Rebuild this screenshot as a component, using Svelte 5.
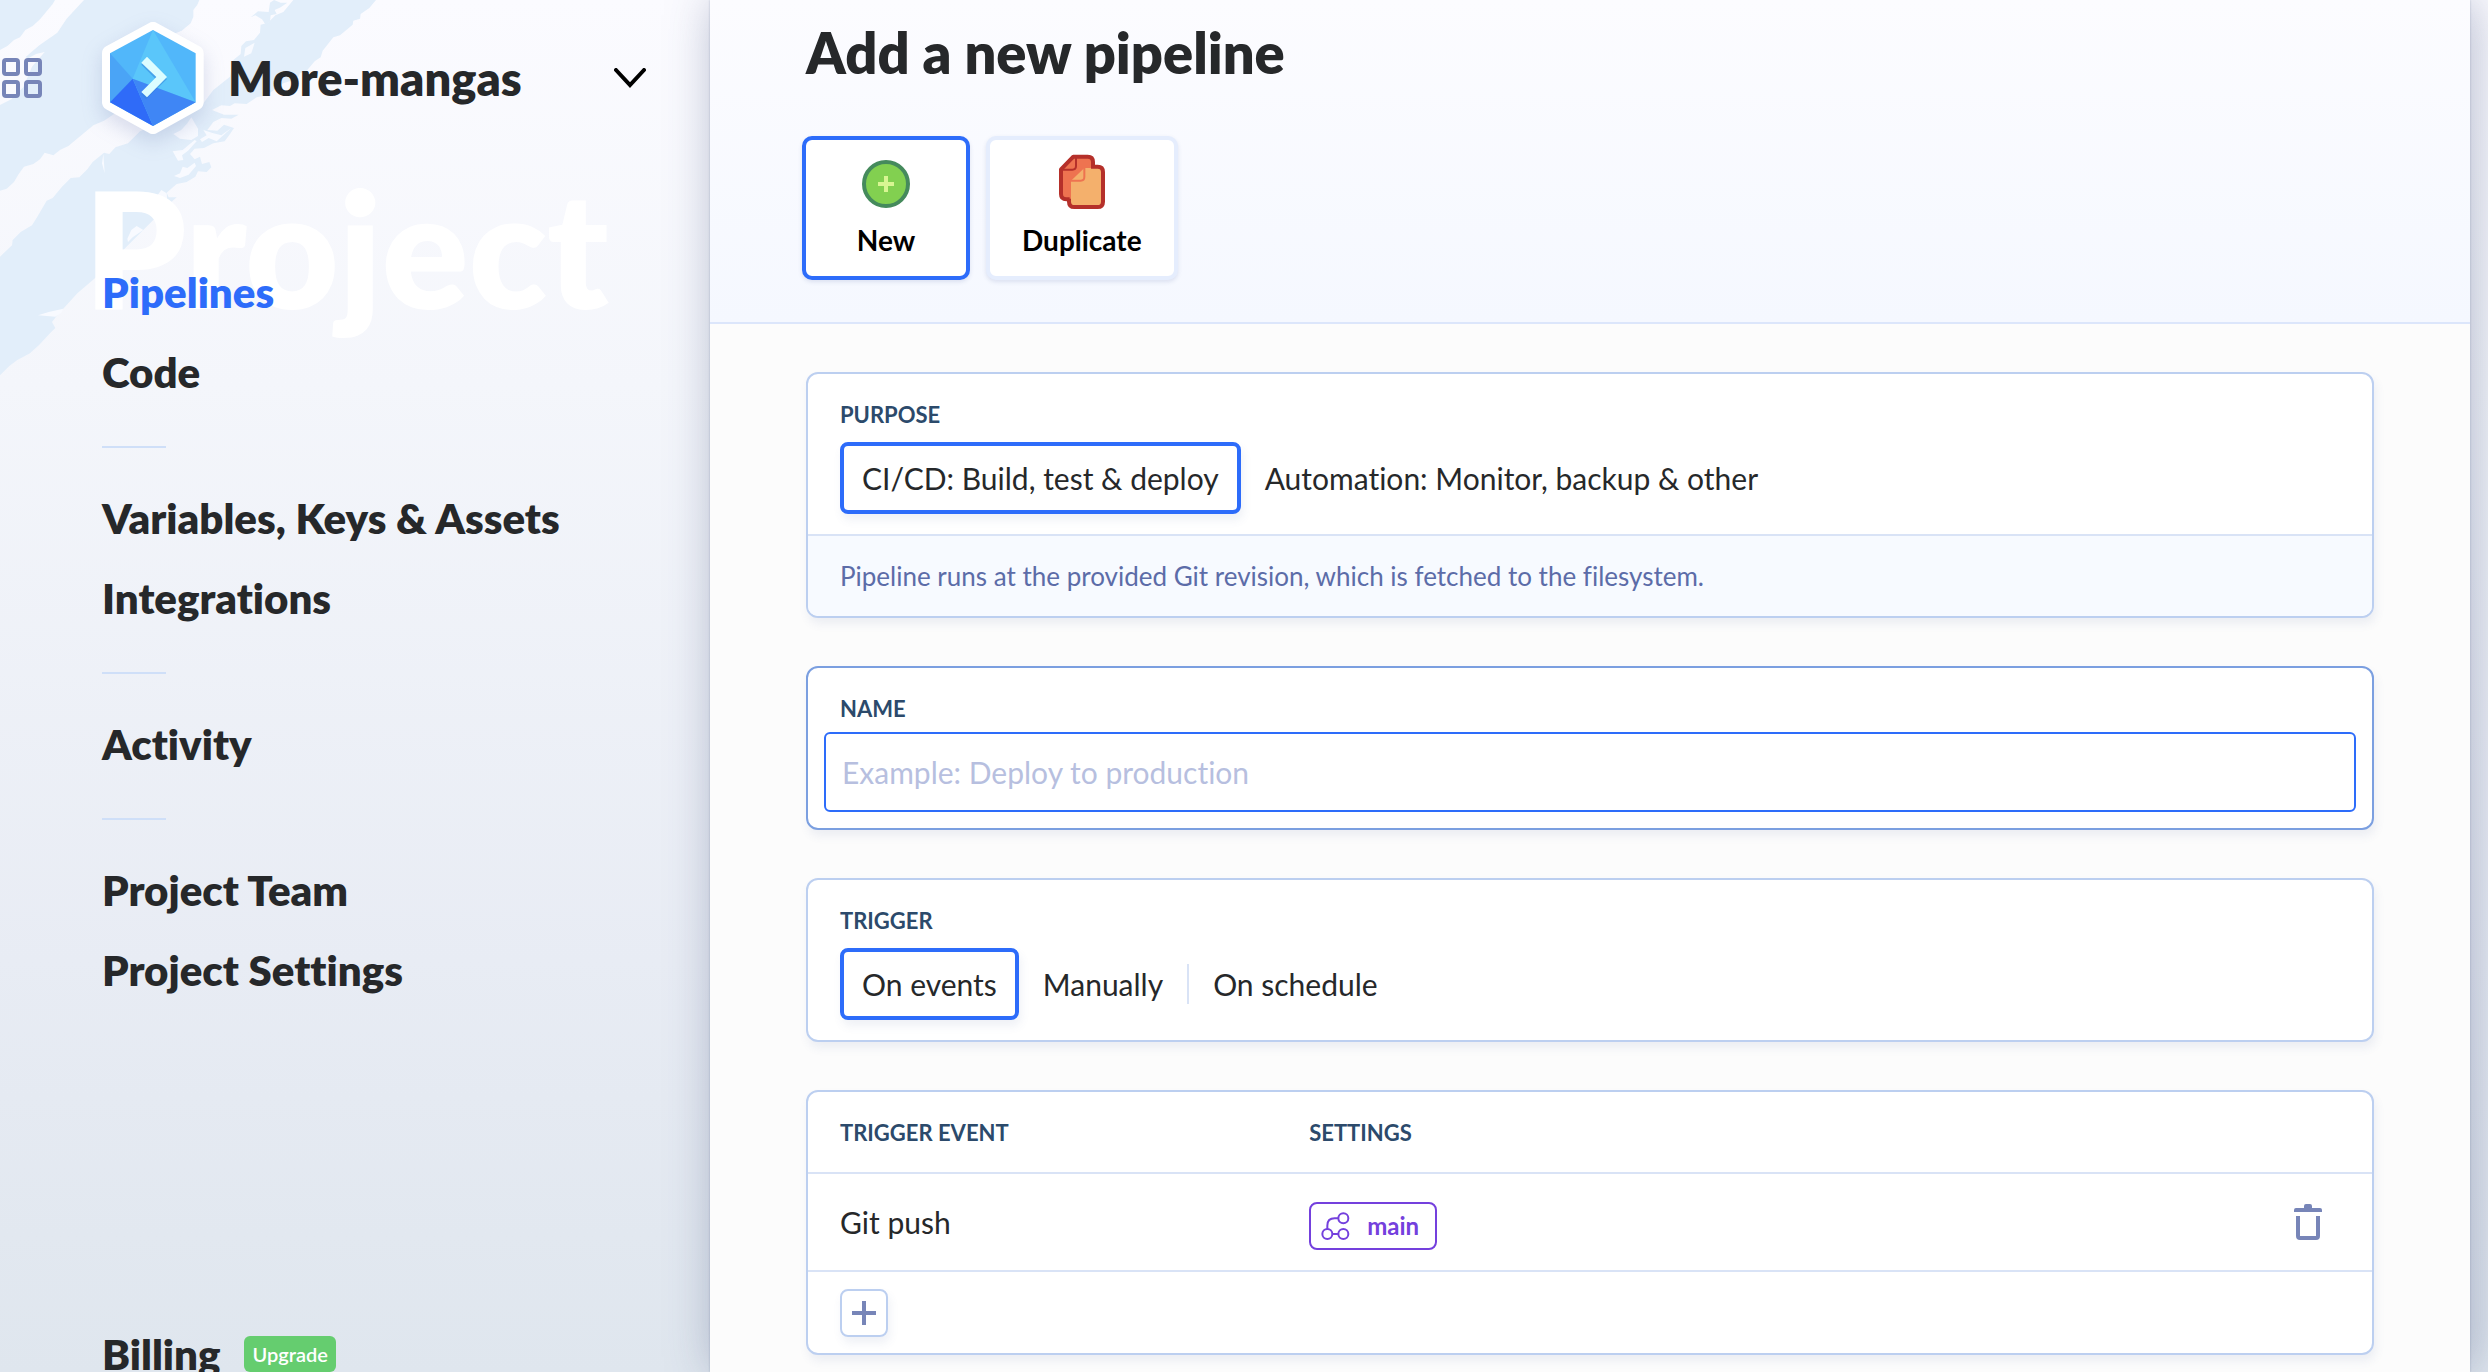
<script>
  const groups = [
    ['Pipelines', 'Code'],
    ['Variables, Keys & Assets', 'Integrations'],
    ['Activity'],
    ['Project Team', 'Project Settings'],
  ];
  let active = $state('Pipelines');
  let mode = $state('New');
  let purpose = $state('cicd');
  let trigger = $state('events');
  let name = $state('');
</script>

<div class="app">
  <aside class="sidebar">
    <svg class="brush" viewBox="0 0 1200 1200" aria-hidden="true">
      <g fill="#e2eefa">
        <path d="M0 0H165L158 12L120 58L98 78L76 90L60 112L42 120L22 138L0 150Z" />
        <path d="M252 0H598L592 14L580 30L580 50L572 70L545 92L500 110L470 130L420 240L360 330L312 362L280 376L205 438L180 450L160 466L134 458L120 478L100 492L72 500L56 522L42 546L20 566L0 572V315L34 298L70 262L96 200L134 156L108 162L82 176L78 170L118 136L172 98L200 56Z" />
        <path d="M880 0H1128L1108 24L1082 42L1080 56L1060 62L1058 74L1020 106L1000 112L968 152L962 172L944 184L920 212L900 220L892 236L850 250L800 286L770 292L740 312L704 310L690 318L664 316L636 330L672 344L716 344L694 356L664 354L640 366L622 390L652 392L672 374L702 384L690 402L674 424L640 430L612 444L584 446L570 462L584 478L600 470L606 492L628 486L634 502L620 516L594 514L586 530L560 546L530 552L500 578L506 592L530 592L514 606L506 624L480 640L290 830L232 880L170 948L156 966L166 984L150 1000L118 1034L90 1060L52 1080L28 1098L0 1126V770L36 736L38 720L62 696L96 676L112 650L140 602L158 594L186 560L212 534L238 532L262 508L278 486L312 458L328 462L346 442L384 430L420 394L520 350L610 310L640 270L690 230L700 180L722 162L724 138L738 124L762 120L780 98L782 74L804 68L826 46L850 36Z" />
        <path d="M752 52L774 34L806 36L810 8L822 0L842 8L862 8L842 22L824 30L830 42L812 46L810 64L798 76L786 58L766 46Z" />
      </g>
      <g fill="#f8faff">
        <path d="M574 352L594 386L594 408L574 420L540 416L520 402L544 390L562 370Z" />
        <path d="M518 454L548 450L584 420L590 424L564 452L546 466L550 480L534 482Z" />
        <path d="M610 390L640 400L664 406L694 384L650 424L626 414L606 426L600 418L620 406Z" />
        <path d="M522 528L540 520L548 500L562 504L584 488L588 498L566 524L540 534Z" />
        <path d="M458 606L484 570L500 580L502 606L494 620Z" />
        <path d="M310 462L306 490L314 520L312 490Z" />
        <path d="M736 144L764 128L754 160L732 170Z" />
        <path d="M114 946L146 936L190 926L184 938L166 950Z" />
        <path d="M382 716L394 690L410 678L430 690L398 712L384 726Z" />
      </g>
    </svg>
    <div class="ghost" aria-hidden="true">Project</div>

    <header class="top">
      <button class="grid" aria-label="All projects">
        <svg width="40" height="40" viewBox="0 0 40 40" fill="none" stroke="#7785b8" stroke-width="4">
          <rect x="2" y="2" width="14" height="14" rx="2" />
          <rect x="24" y="2" width="14" height="14" rx="2" />
          <rect x="2" y="24" width="14" height="14" rx="2" />
          <rect x="24" y="24" width="14" height="14" rx="2" />
        </svg>
      </button>
      <button class="switcher">
        <svg class="logo" width="102" height="112" viewBox="36 36 306 336" aria-hidden="true">
          <path d="M189 60L317 130V277L189 348L60 277V130Z" fill="#fff" stroke="#fff" stroke-width="48" stroke-linejoin="round" />
          <path d="M189 60L317 130V277L189 348L60 277V130Z" fill="#51b7fa" />
          <path d="M60 130L128 206L60 277Z" fill="#4aa4f6" />
          <path d="M189 60L128 206L317 277Z" fill="#5ac6fa" />
          <path d="M60 277L128 206L189 348Z" fill="#2f6bf8" />
          <path d="M128 206L317 277L189 348Z" fill="#3f86f5" />
          <path d="M168 146L231 207L168 268L154 252L197 207L154 164Z" fill="#2f7fdc" opacity=".5" />
          <path d="M171 140L231 201L171 262L154 246L199 201L154 158Z" fill="#dcfdff" />
        </svg>
        <span class="project">More-mangas</span>
        <svg width="32" height="20" viewBox="0 0 32 20" fill="none" stroke="#000" stroke-width="4" stroke-linecap="round" aria-hidden="true">
          <path d="M2 2L16 17L30 2" />
        </svg>
      </button>
    </header>

    <nav>
      {#each groups as items, i}
        {#if i > 0}<hr />{/if}
        {#each items as item}
          <a href="#{item}" class:active={item === active} onclick={() => (active = item)}>{item}</a>
        {/each}
      {/each}
      <div class="billing">
        <a href="#billing">Billing</a>
        <a class="upgrade" href="#upgrade">Upgrade</a>
      </div>
    </nav>
  </aside>

  <main>
    <header class="head">
      <h1>Add a new pipeline</h1>
      <div class="modes">
        <button class:on={mode === 'New'} onclick={() => (mode = 'New')}>
          <svg width="48" height="56" viewBox="0 0 48 56" aria-hidden="true">
            <circle cx="24" cy="30" r="22" fill="#82d050" stroke="#458a5c" stroke-width="4" />
            <path d="M24 22V38M16 30H32" stroke="#d8f592" stroke-width="4" />
          </svg>
          New
        </button>
        <button class:on={mode === 'Duplicate'} onclick={() => (mode = 'Duplicate')}>
          <svg width="46" height="56" viewBox="630 24 138 168" fill="none" aria-hidden="true">
            <path d="M673 32H716Q732 32 732 48V160H652Q636 160 636 144V70Z" fill="#ee7350" stroke="#b5302a" stroke-width="12" stroke-linejoin="round" />
            <path d="M681 34V60Q681 71 670 71H638" stroke="#b5302a" stroke-width="6" />
            <path d="M707 66H762V184H662V104Z" fill="#ee7350" />
            <path d="M706 66H746Q757 66 757 77V168Q757 179 746 179H677Q666 179 666 168V104Z" fill="#f4b06c" />
            <path d="M706 66V93Q706 104 695 104H666" stroke="#ee7350" stroke-width="6" />
            <path d="M726 62H746Q762 62 762 78V167Q762 183 746 183H676Q660 183 660 167V158" stroke="#b5302a" stroke-width="12" />
          </svg>
          Duplicate
        </button>
      </div>
    </header>

    <div class="content">
      <section class="card">
        <div class="body">
          <h2>PURPOSE</h2>
          <div class="options">
            <button class:on={purpose === 'cicd'} onclick={() => (purpose = 'cicd')}>CI/CD: Build, test &amp; deploy</button>
            <button class:on={purpose === 'auto'} onclick={() => (purpose = 'auto')}>Automation: Monitor, backup &amp; other</button>
          </div>
        </div>
        <p class="help">Pipeline runs at the provided Git revision, which is fetched to the filesystem.</p>
      </section>

      <section class="card focused">
        <div class="field">
          <label for="name">NAME</label>
          <input id="name" type="text" placeholder="Example: Deploy to production" bind:value={name} />
        </div>
      </section>

      <section class="card">
        <div class="body">
          <h2>TRIGGER</h2>
          <div class="options">
            <button class:on={trigger === 'events'} onclick={() => (trigger = 'events')}>On events</button>
            <button class:on={trigger === 'manual'} onclick={() => (trigger = 'manual')}>Manually</button>
            <span class="sep"></span>
            <button class:on={trigger === 'schedule'} onclick={() => (trigger = 'schedule')}>On schedule</button>
          </div>
        </div>
      </section>

      <section class="card">
        <table>
          <thead>
            <tr><th class="event">TRIGGER EVENT</th><th>SETTINGS</th><th></th></tr>
          </thead>
          <tbody>
            <tr>
              <td class="event">Git push</td>
              <td class="setting">
                <span class="branch">
                  <svg width="30" height="28" viewBox="62 64 90 84" fill="none" stroke="#7440dd" stroke-width="6" aria-hidden="true">
                    <circle cx="129" cy="83" r="15" />
                    <circle cx="81" cy="130" r="15" />
                    <circle cx="129" cy="130" r="15" />
                    <path d="M81 115V105Q81 83 103 83H114M96 130H114" />
                  </svg>
                  main
                </span>
              </td>
              <td class="remove">
                <button aria-label="Delete trigger">
                  <svg width="28" height="36" viewBox="0 0 28 36" aria-hidden="true">
                    <path d="M0 8V6Q0 4 2 4H10V2Q10 0 12 0H16Q18 0 18 2V4H26Q28 4 28 6V8Z" fill="#7785b8" />
                    <path d="M4 12V32Q4 34 6 34H22Q24 34 24 32V12" fill="none" stroke="#7785b8" stroke-width="4" />
                  </svg>
                </button>
              </td>
            </tr>
          </tbody>
        </table>
        <div class="add">
          <button aria-label="Add trigger">
            <svg width="24" height="24" viewBox="0 0 24 24" stroke="#7785b8" stroke-width="4" aria-hidden="true">
              <path d="M12 0V24M0 12H24" />
            </svg>
          </button>
        </div>
      </section>
    </div>
  </main>
</div>

<style>
  :global(body) {
    margin: 0;
  }
  .app,
  button,
  input {
    font-family: Lato, 'Liberation Sans', sans-serif;
    font-variant-ligatures: none;
    color: #26282a;
  }
  .app,
  .app * {
    box-sizing: border-box;
  }
  button {
    background: none;
    border: 0;
    padding: 0;
    margin: 0;
    cursor: pointer;
  }
  svg {
    display: block;
    flex: none;
  }
  .app {
    display: flex;
    height: 100vh;
    overflow: hidden;
    padding-right: 18px;
    background: linear-gradient(#fbfbff 0, #f4f6fb 28%, #e8ecf4 70%, #dfe6ee 100%);
  }

  .sidebar {
    position: relative;
    flex: 0 0 710px;
    display: flex;
    flex-direction: column;
    height: calc(100vh + 22px);
  }
  .brush {
    position: absolute;
    top: 0;
    left: 0;
    width: 400px;
    height: 400px;
  }
  .ghost {
    position: absolute;
    top: 167px;
    left: 84px;
    font-size: 161px;
    line-height: 160px;
    font-weight: 800;
    color: #fff;
  }
  .top {
    position: relative;
    display: flex;
    align-items: center;
    gap: 60px;
    height: 156px;
    padding: 0 64px 0 2px;
  }
  .switcher {
    flex: 1;
    display: flex;
    align-items: center;
    gap: 24px;
    text-align: left;
  }
  .logo {
    filter: drop-shadow(0 8px 10px rgba(90, 110, 170, 0.22));
    overflow: visible;
  }
  .project {
    flex: 1;
    font-size: 47px;
    font-weight: 800;
    line-height: 56px;
  }
  nav {
    position: relative;
    flex: 1;
    display: flex;
    flex-direction: column;
    padding: 96px 64px 0 102px;
  }
  nav a {
    font-size: 42px;
    font-weight: 800;
    line-height: 80px;
    color: #26282a;
    text-decoration: none;
  }
  nav a.active {
    color: #2d6cfa;
  }
  hr {
    flex: none;
    width: 64px;
    height: 2px;
    border: 0;
    margin: 34px 0 30px;
    background: #cfdff8;
  }
  .billing {
    margin-top: auto;
    display: flex;
    align-items: center;
    gap: 24px;
  }
  .billing .upgrade {
    padding: 0 8px;
    border-radius: 6px;
    background: #65cd6f;
    color: #fff;
    font-size: 20px;
    font-weight: 600;
    line-height: 36px;
  }

  main {
    flex: 1;
    min-width: 0;
    position: relative;
    background: #fcfcfc;
    box-shadow: 0 0 2px rgba(60, 75, 120, 0.3), 4px 0 44px rgba(60, 75, 120, 0.36);
  }
  .head {
    padding: 21px 96px 42px;
    border-bottom: 2px solid #dce6fb;
    background: linear-gradient(#fcfcff, #f5f8ff);
  }
  h1 {
    margin: 0 0 51px;
    font-size: 56px;
    line-height: 64px;
    font-weight: 800;
  }
  .modes {
    display: flex;
    gap: 16px;
    margin-left: -4px;
  }
  .modes button {
    display: flex;
    flex-direction: column;
    align-items: center;
    gap: 12px;
    min-width: 168px;
    padding: 14px 32px 18px;
    border: 4px solid #e5edfd;
    border-radius: 10px;
    background: #fff;
    box-shadow: 0 2px 4px rgba(80, 100, 160, 0.16);
    font-size: 28px;
    line-height: 36px;
    font-weight: 700;
    color: #000;
  }
  .modes button.on {
    border-color: #2d6cfa;
  }

  .content {
    display: flex;
    flex-direction: column;
    gap: 48px;
    padding: 48px 96px;
  }
  .card {
    border: 2px solid #bccff0;
    border-radius: 12px;
    background: #fff;
    box-shadow: 2px 6px 10px rgba(80, 100, 160, 0.09);
    overflow: hidden;
  }
  .card.focused {
    border-color: #7b9fe0;
  }
  .body {
    padding: 27px 32px 20px;
  }
  h2,
  label,
  th {
    margin: 0;
    font-size: 22px;
    line-height: 28px;
    font-weight: 700;
    color: #2c4a6b;
  }
  .options {
    display: flex;
    align-items: center;
    gap: 24px;
    margin-top: 13px;
  }
  .options button {
    height: 72px;
    font-size: 30px;
    line-height: 36px;
  }
  .options button.on {
    padding: 0 18px;
    border: 4px solid #2d6cfa;
    border-radius: 8px;
    box-shadow: 2px 6px 10px rgba(80, 100, 160, 0.09);
  }
  .sep {
    width: 2px;
    height: 40px;
    background: #d9e3f6;
  }
  .help {
    margin: 0;
    padding: 24px 32px;
    border-top: 2px solid #d9e3f6;
    background: #f7faff;
    font-size: 26px;
    line-height: 32px;
    color: #5c6ca8;
  }
  .field {
    display: flex;
    flex-direction: column;
    gap: 9px;
    padding: 27px 16px 16px;
  }
  label {
    padding-left: 16px;
  }
  input {
    width: 100%;
    height: 80px;
    padding: 0 16px;
    border: 2px solid #2d6cfa;
    border-radius: 6px;
    background: #fff;
    font-size: 30px;
    outline: none;
  }
  input::placeholder {
    color: #b7bfdf;
    opacity: 1;
  }

  table {
    width: 100%;
    border-collapse: separate;
    border-spacing: 0;
    table-layout: fixed;
  }
  th,
  td {
    padding: 0 32px;
    border-bottom: 2px solid #d9e3f6;
    text-align: left;
  }
  th {
    height: 82px;
    padding-top: 2px;
  }
  td {
    height: 98px;
    font-size: 30px;
  }
  .event {
    width: 30%;
  }
  .setting {
    padding-top: 28px;
    vertical-align: top;
  }
  .branch {
    display: inline-flex;
    align-items: center;
    gap: 16px;
    height: 48px;
    padding: 0 16px 0 10px;
    border: 2px solid #7440dd;
    border-radius: 8px;
    color: #7440dd;
    font-size: 24px;
    font-weight: 700;
    line-height: 44px;
    vertical-align: top;
  }
  .remove {
    padding-right: 50px;
  }
  .remove button {
    display: block;
    margin-left: auto;
  }
  .add {
    padding: 17px 32px 16px;
  }
  .add button {
    display: grid;
    place-items: center;
    width: 48px;
    height: 48px;
    border: 2px solid #bccff0;
    border-radius: 8px;
    box-shadow: 2px 6px 10px rgba(80, 100, 160, 0.09);
  }
</style>
